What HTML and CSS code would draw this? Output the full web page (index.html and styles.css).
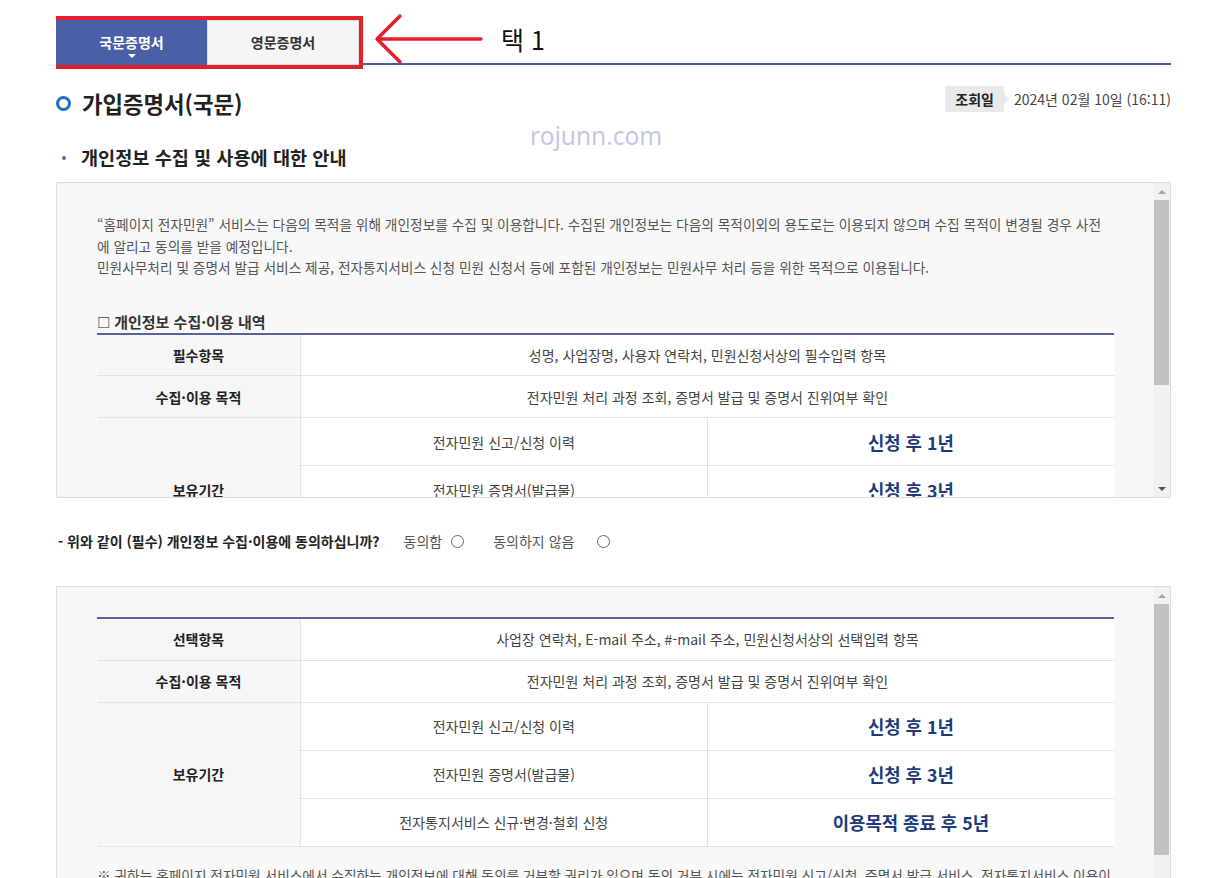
FILE: index.html
```html
<!DOCTYPE html>
<html lang="ko">
<head>
    <meta charset="UTF-8">
    <meta name="viewport" content="width=device-width, initial-scale=1.0">
    <title>가입증명서(국문)</title>
    <link rel="stylesheet" href="styles.css">
</head>
<body>
    <div class="page">
        <div class="tab-bar">
            <div class="tabs">
                <button class="tab active">국문증명서</button>
                <button class="tab">영문증명서</button>
            </div>
            <svg class="annot-arrow" width="112" height="52" viewBox="0 0 112 52">
                <path d="M4 26 H108 M27 3 L4 26 L27 49" fill="none" stroke="#e3202b" stroke-width="3.5" stroke-linecap="round" stroke-linejoin="round"/>
            </svg>
            <span class="annot-label">택 1</span>
        </div>

        <div class="title-row">
            <h1 class="title"><span class="ring"></span>가입증명서(국문)</h1>
            <div class="meta">
                <span class="meta-label">조회일</span>
                <span class="meta-date">2024년 02월 10일 (16:11)</span>
            </div>
        </div>

        <div class="watermark">rojunn.com</div>

        <h2 class="subtitle">개인정보 수집 및 사용에 대한 안내</h2>

        <div class="scroll-box first">
            <div class="scroll-body">
                <p class="intro">“홈페이지 전자민원” 서비스는 다음의 목적을 위해 개인정보를 수집 및 이용합니다. 수집된 개인정보는 다음의 목적이외의 용도로는 이용되지 않으며 수집 목적이 변경될 경우 사전<br>에 알리고 동의를 받을 예정입니다.<br>민원사무처리 및 증명서 발급 서비스 제공, 전자통지서비스 신청 민원 신청서 등에 포함된 개인정보는 민원사무 처리 등을 위한 목적으로 이용됩니다.</p>
                <p class="caption"><span class="box-mark">☐</span> 개인정보 수집·이용 내역</p>
                <table class="info-table">
                    <colgroup><col class="c-head"><col><col></colgroup>
                    <tr class="short">
                        <th>필수항목</th>
                        <td colspan="2">성명, 사업장명, 사용자 연락처, 민원신청서상의 필수입력 항목</td>
                    </tr>
                    <tr class="short">
                        <th>수집·이용 목적</th>
                        <td colspan="2">전자민원 처리 과정 조회, 증명서 발급 및 증명서 진위여부 확인</td>
                    </tr>
                    <tr class="keep">
                        <th rowspan="3">보유기간</th>
                        <td>전자민원 신고/신청 이력</td>
                        <td class="period">신청 후 1년</td>
                    </tr>
                    <tr class="keep">
                        <td>전자민원 증명서(발급물)</td>
                        <td class="period">신청 후 3년</td>
                    </tr>
                    <tr class="keep">
                        <td>전자통지서비스 신규·변경·철회 신청</td>
                        <td class="period">이용목적 종료 후 5년</td>
                    </tr>
                </table>
                <p class="note">※ 귀하는 홈페이지 전자민원 서비스에서 수집하는 개인정보에 대해 동의를 거부할 권리가 있으며 동의 거부 시에는 전자민원 신고/신청, 증명서 발급 서비스, 전자통지서비스 이용이 제한됩니다.</p>
            </div>
            <div class="scrollbar">
                <span class="sb-btn up"></span>
                <span class="sb-thumb"></span>
                <span class="sb-track"></span>
                <span class="sb-btn down"></span>
            </div>
        </div>

        <div class="consent">
            <span class="question">- 위와 같이 (필수) 개인정보 수집·이용에 동의하십니까?</span>
            <span class="choice">동의함</span>
            <span class="radio"></span>
            <span class="choice wide">동의하지 않음</span>
            <span class="radio wide"></span>
        </div>

        <div class="scroll-box second">
            <div class="scroll-body">
                <table class="info-table">
                    <colgroup><col class="c-head"><col><col></colgroup>
                    <tr class="short">
                        <th>선택항목</th>
                        <td colspan="2">사업장 연락처, E-mail 주소, #-mail 주소, 민원신청서상의 선택입력 항목</td>
                    </tr>
                    <tr class="short">
                        <th>수집·이용 목적</th>
                        <td colspan="2">전자민원 처리 과정 조회, 증명서 발급 및 증명서 진위여부 확인</td>
                    </tr>
                    <tr class="keep">
                        <th rowspan="3">보유기간</th>
                        <td>전자민원 신고/신청 이력</td>
                        <td class="period">신청 후 1년</td>
                    </tr>
                    <tr class="keep">
                        <td>전자민원 증명서(발급물)</td>
                        <td class="period">신청 후 3년</td>
                    </tr>
                    <tr class="keep">
                        <td>전자통지서비스 신규·변경·철회 신청</td>
                        <td class="period">이용목적 종료 후 5년</td>
                    </tr>
                </table>
                <p class="note">※ 귀하는 홈페이지 전자민원 서비스에서 수집하는 개인정보에 대해 동의를 거부할 권리가 있으며 동의 거부 시에는 전자민원 신고/신청, 증명서 발급 서비스, 전자통지서비스 이용이 제한됩니다.</p>
            </div>
            <div class="scrollbar">
                <span class="sb-btn up"></span>
                <span class="sb-thumb"></span>
                <span class="sb-track"></span>
                <span class="sb-btn down"></span>
            </div>
        </div>
    </div>
</body>
</html>
```

FILE: styles.css
```css
:root {
    --navy: #4b5fa9;
    --table-line: #53649f;
    --cell-line: #e2e2e2;
    --text: #444;
    --text-dark: #222;
    --red: #e3202b;
}

* {
    box-sizing: border-box;
    margin: 0;
    padding: 0;
}

body {
    background: #fff;
    font-family: "Noto Sans CJK KR", "Noto Sans", sans-serif;
    color: var(--text);
}

.page {
    position: relative;
    width: 1115px;
    margin-left: 56px;
    padding-top: 20px;
    height: 100vh;
    overflow: hidden;
}

/* tabs */
.tab-bar {
    display: flex;
    align-items: center;
    height: 45px;
    border-bottom: 2px solid var(--navy);
}

.tabs {
    display: flex;
    align-self: flex-start;
    height: 45px;
    margin-bottom: -2px;
    outline: 4px solid var(--red);
}

.tab {
    position: relative;
    width: 152px;
    border: 1px solid #dcdcdc;
    background: #f5f5f5;
    font-family: inherit;
    font-size: 14px;
    font-weight: 700;
    color: #333;
    padding-bottom: 2px;
}

.tab.active {
    width: 151px;
    background: var(--navy);
    border-color: var(--navy);
    color: #fff;
}

.tab.active::after {
    content: "";
    position: absolute;
    left: 50%;
    bottom: 6px;
    margin-left: -4px;
    border-left: 4px solid transparent;
    border-right: 4px solid transparent;
    border-top: 4px solid #fff;
}

.annot-arrow {
    margin-left: 14px;
    margin-top: -6px;
}

.annot-label {
    margin-left: 16px;
    margin-top: -6px;
    font-size: 25px;
    color: #111;
}

/* title */
.title-row {
    display: flex;
    justify-content: space-between;
    align-items: flex-start;
    margin-top: 21px;
}

.title {
    display: flex;
    align-items: center;
    font-size: 22.3px;
    line-height: 34px;
    font-weight: 700;
    color: var(--text-dark);
}

.ring {
    width: 15px;
    height: 15px;
    border: 3px solid #1d6fc2;
    border-radius: 50%;
    margin-right: 11px;
}

.meta {
    display: flex;
    align-items: center;
    height: 26px;
}

.meta-label {
    position: relative;
    height: 26px;
    line-height: 26px;
    padding: 0 10px;
    background: #e9e9e9;
    font-size: 14px;
    font-weight: 700;
    color: var(--text-dark);
}

.meta-label::after {
    content: "";
    position: absolute;
    right: -5px;
    top: 8px;
    border-top: 5px solid transparent;
    border-bottom: 5px solid transparent;
    border-left: 5px solid #e9e9e9;
}

.meta-date {
    margin-left: 10px;
    font-size: 14px;
    color: #444;
}

.watermark {
    position: absolute;
    left: 474px;
    top: 119px;
    font-family: "Noto Sans", sans-serif;
    font-size: 24.5px;
    color: #c6c6e8;
}

.subtitle {
    display: flex;
    align-items: center;
    margin-top: 24px;
    font-size: 18.6px;
    line-height: 26px;
    font-weight: 700;
    color: var(--text-dark);
}

.subtitle::before {
    content: "";
    width: 4px;
    height: 4px;
    border-radius: 50%;
    background: #5b6aa6;
    margin: 2px 15px 0 6px;
}

/* scroll boxes */
.scroll-box {
    display: flex;
    height: 316px;
    margin-top: 12px;
    border: 1px solid #dcdcdc;
    background: #f8f8f8;
}

.scroll-body {
    flex: 1;
    overflow: hidden;
    padding: 31px 39px 0 40px;
}

.second .scroll-body {
    padding-top: 30px;
}

.scrollbar {
    flex: none;
    width: 17px;
    display: flex;
    flex-direction: column;
    background: #f1f1f1;
}

.sb-btn {
    flex: none;
    height: 17px;
    display: flex;
    align-items: center;
    justify-content: center;
}

.sb-btn::before {
    content: "";
    border-left: 4px solid transparent;
    border-right: 4px solid transparent;
}

.sb-btn.up::before {
    border-bottom: 4px solid #a3a3a3;
}

.sb-btn.down::before {
    border-top: 4px solid #505050;
}

.sb-thumb {
    flex: none;
    margin: 0 1px;
    background: #c1c1c1;
}

.first .sb-thumb {
    height: 185px;
}

.second .sb-thumb {
    height: 251px;
}

.sb-track {
    flex: 1;
}

.intro {
    font-size: 13.7px;
    line-height: 21.5px;
    color: #555;
}

.caption {
    margin-top: 33px;
    margin-bottom: 1px;
    font-size: 15px;
    line-height: 20px;
    font-weight: 700;
    color: #333;
}

.box-mark {
    font-weight: 400;
    color: #666;
}

.info-table {
    width: 100%;
    border-collapse: collapse;
    table-layout: fixed;
    border-top: 2px solid var(--table-line);
    border-bottom: 1px solid #a9a9a9;
    font-size: 14px;
}

.c-head {
    width: 20%;
}

.info-table th {
    background: #f6f6f6;
    color: var(--text-dark);
    font-weight: 700;
    border-bottom: 1px solid var(--cell-line);
    border-right: 1px solid var(--cell-line);
}

.info-table td {
    background: #fff;
    text-align: center;
    color: var(--text);
    border-bottom: 1px solid var(--cell-line);
}

.info-table td + td {
    border-left: 1px solid var(--cell-line);
}

.info-table tr.short {
    height: 42px;
}

.info-table tr.keep {
    height: 48px;
}

.info-table .period {
    font-size: 17.8px;
    font-weight: 700;
    color: #1c3a7c;
}

.note {
    margin-top: 18px;
    font-size: 13.7px;
    line-height: 21.5px;
    color: #555;
}

/* consent */
.consent {
    display: flex;
    align-items: center;
    margin-top: 33px;
    margin-left: 2px;
    height: 20px;
    font-size: 14px;
}

.consent + .scroll-box {
    margin-top: 35px;
}

.question {
    font-weight: 700;
    color: var(--text-dark);
}

.choice {
    margin-left: 24px;
    color: #555;
}

.choice.wide {
    margin-left: 29px;
}

.radio {
    flex: none;
    width: 13px;
    height: 13px;
    margin-left: 9px;
    border: 1px solid #666;
    border-radius: 50%;
    background: #fff;
}

.radio.wide {
    margin-left: 23px;
}
```
